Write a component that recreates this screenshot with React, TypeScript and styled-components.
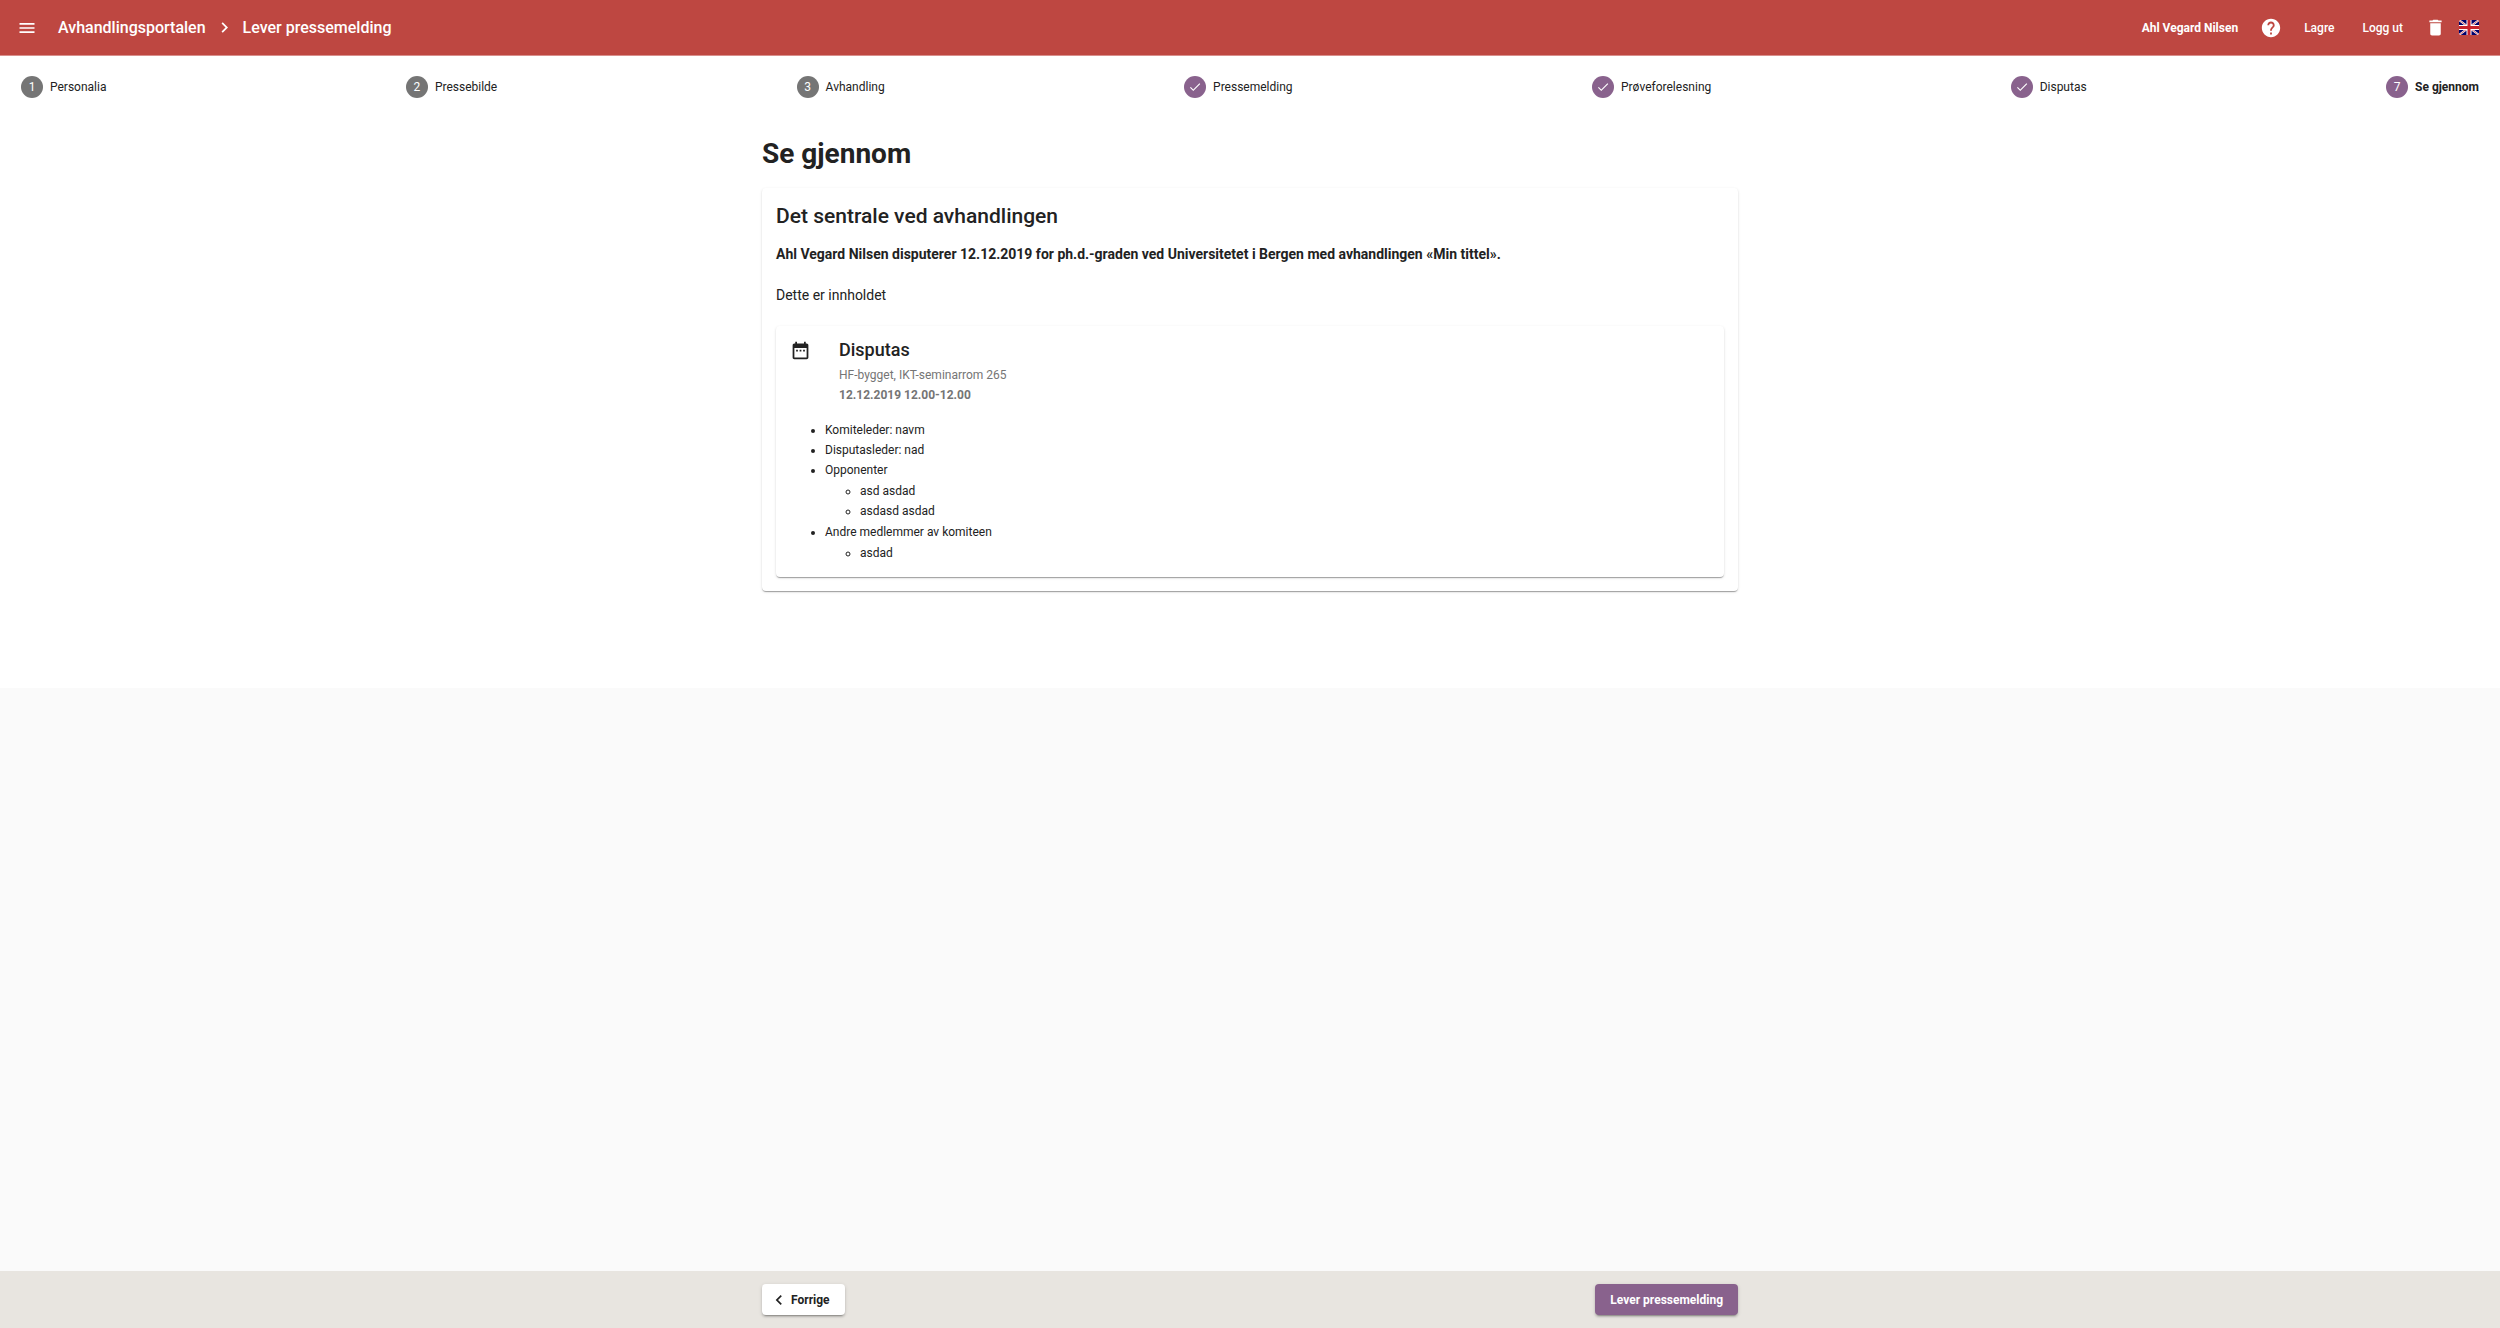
import React from "react";
import styled, { createGlobalStyle, css } from "styled-components";

const GlobalStyle = createGlobalStyle`
  *, *::before, *::after { box-sizing: border-box; }
  body {
    margin: 0;
    background: #fafafa;
    color: #222;
    font-family: Roboto, "Liberation Sans", sans-serif;
    font-size: 12px;
    line-height: 20px;
  }
  h1, h2, h3, p, ul, ol { margin: 0; padding: 0; }
`;

const Page = styled.div`
  min-height: 100vh;
  display: flex;
  flex-direction: column;
`;

const TopBar = styled.header`
  height: 56px;
  padding: 0 21px 0 17px;
  display: flex;
  align-items: center;
  justify-content: space-between;
  background: #be4741;
  border-bottom: 1px solid #d98f8c;
  color: #fff;
`;

const Group = styled.div<{ $gap: number }>`
  display: flex;
  align-items: center;
  gap: ${(p) => p.$gap}px;
`;

const bare = css`
  display: flex;
  align-items: center;
  padding: 0;
  border: 0;
  background: none;
  color: inherit;
  font: inherit;
  font-weight: 500;
  text-decoration: none;
  cursor: pointer;
`;

const BarButton = styled.button`
  ${bare}
`;

const BarText = styled.span`
  font-weight: 700;
`;

const Crumbs = styled.nav`
  display: flex;
  align-items: center;
  gap: 8px;
  font-size: 16px;
  font-weight: 500;
`;

const CrumbLink = styled.a`
  ${bare}
`;

const Icon = styled.svg<{ $size: number }>`
  display: block;
  flex: none;
  width: ${(p) => p.$size}px;
  height: ${(p) => p.$size}px;
  fill: currentColor;
`;

const Flag = styled.svg`
  display: block;
  width: 20px;
  height: 15px;
`;

const Main = styled.main`
  background: #fff;
  padding-bottom: 97px;
`;

const Steps = styled.ol`
  display: flex;
  justify-content: space-between;
  padding: 20px 21px 0;
  list-style: none;
`;

const StepButton = styled.button<{ $current: boolean }>`
  ${bare}
  gap: 7px;
  height: 22px;
  font-weight: ${(p) => (p.$current ? 700 : 400)};
`;

const Dot = styled.span<{ $active: boolean }>`
  display: flex;
  align-items: center;
  justify-content: center;
  width: 22px;
  height: 22px;
  border-radius: 50%;
  background: ${(p) => (p.$active ? "#89628d" : "#757575")};
  color: #fff;
  font-weight: 400;
`;

const Column = styled.div`
  width: 100%;
  max-width: 976px;
  margin: 0 auto;
`;

const Title = styled.h1`
  margin: 37px 0 15px;
  font-size: 28px;
  line-height: 38px;
  font-weight: 700;
`;

const Card = styled.section`
  border-radius: 4px;
  background: #fff;
  box-shadow: 0 1px 3px rgba(0, 0, 0, 0.12), 0 1px 1px rgba(0, 0, 0, 0.14),
    0 2px 1px -1px rgba(0, 0, 0, 0.2);
`;

const SummaryCard = styled(Card)`
  padding: 14px;
`;

const CardHeading = styled.h2`
  font-size: 21px;
  line-height: 28px;
  font-weight: 500;
`;

const Lead = styled.p`
  margin-top: 14px;
  font-size: 14px;
  font-weight: 700;
`;

const Body = styled.p`
  margin: 21px 0;
  font-size: 14px;
`;

const EventCard = styled(Card)`
  padding: 14px 14px 13px;
`;

const EventHeader = styled.div`
  display: flex;
  gap: 28px;
`;

const EventTitle = styled.h3`
  font-size: 18px;
  line-height: 20px;
  font-weight: 500;
`;

const EventMeta = styled.p<{ $strong?: boolean }>`
  margin-top: ${(p) => (p.$strong ? 0 : 5)}px;
  color: #757575;
  font-weight: ${(p) => (p.$strong ? 700 : 400)};
`;

const List = styled.ul`
  margin-top: 15px;
  padding-left: 35px;
`;

const SubList = styled.ul`
  margin: 1px 0;
  padding-left: 35px;
`;

const Footer = styled.footer`
  position: sticky;
  bottom: 0;
  margin-top: auto;
  padding: 13px 0;
  background: #e8e5e0;
`;

const FooterRow = styled(Column)`
  display: flex;
  justify-content: space-between;
`;

const Action = styled.button<{ $primary?: boolean }>`
  display: flex;
  align-items: center;
  gap: 2px;
  height: 31px;
  padding: ${(p) => (p.$primary ? "0 15px" : "0 15px 0 7px")};
  border: 0;
  border-radius: 4px;
  background: ${(p) => (p.$primary ? "#89628d" : "#fff")};
  color: ${(p) => (p.$primary ? "#fff" : "#222")};
  font: inherit;
  font-weight: 700;
  cursor: pointer;
  box-shadow: 0 1px 4px rgba(0, 0, 0, 0.12), 0 2px 2px rgba(0, 0, 0, 0.14),
    0 3px 1px -2px rgba(0, 0, 0, 0.2);
`;

const paths = {
  menu: "M3 18h18v-2H3v2zm0-5h18v-2H3v2zm0-7v2h18V6H3z",
  right: "M10 6L8.59 7.41 13.17 12l-4.58 4.59L10 18l6-6z",
  left: "M15.41 7.41L14 6l-6 6 6 6 1.41-1.41L10.83 12z",
  help: "M12 2C6.48 2 2 6.48 2 12s4.48 10 10 10 10-4.48 10-10S17.52 2 12 2zm1 17h-2v-2h2v2zm2.07-7.75l-.9.92C13.45 12.9 13 13.5 13 15h-2v-.5c0-1.1.45-2.1 1.17-2.83l1.24-1.26c.37-.36.59-.86.59-1.41 0-1.1-.9-2-2-2s-2 .9-2 2H8c0-2.21 1.79-4 4-4s4 1.79 4 4c0 .88-.36 1.68-.93 2.25z",
  trash: "M6 19c0 1.1.9 2 2 2h8c1.1 0 2-.9 2-2V7H6v12zM19 4h-3.5l-1-1h-5l-1 1H5v2h14V4z",
  check: "M9 16.17L4.83 12l-1.42 1.41L9 19 21 7l-1.41-1.41z",
  calendar:
    "M9 11H7v2h2v-2zm4 0h-2v2h2v-2zm4 0h-2v2h2v-2zm2-7h-1V2h-2v2H8V2H6v2H5c-1.11 0-1.99.9-1.99 2L3 20c0 1.1.89 2 2 2h14c1.1 0 2-.9 2-2V6c0-1.1-.9-2-2-2zm0 16H5V9h14v11z",
};

const Glyph = ({ name, size }: { name: keyof typeof paths; size: number }) => (
  <Icon $size={size} viewBox="0 0 24 24" aria-hidden="true">
    <path d={paths[name]} />
  </Icon>
);

const UkFlag = () => (
  <Flag viewBox="0 0 20 15" aria-hidden="true">
    <rect width="20" height="15" fill="#00006b" />
    <path d="M0 0L20 15M20 0L0 15" stroke="#fff" strokeWidth="2" />
    <path d="M0 0L20 15M20 0L0 15" stroke="#c8232c" strokeWidth="0.7" />
    <path d="M10 0V15M0 7.5H20" stroke="#fff" strokeWidth="5" />
    <path d="M10 0V15M0 7.5H20" stroke="#c8232c" strokeWidth="3" />
  </Flag>
);

const steps = [
  { label: "Personalia", done: false },
  { label: "Pressebilde", done: false },
  { label: "Avhandling", done: false },
  { label: "Pressemelding", done: true },
  { label: "Prøveforelesning", done: true },
  { label: "Disputas", done: true },
  { label: "Se gjennom", done: false },
];
const currentStep = 6;

export default function App() {
  return (
    <Page>
      <GlobalStyle />
      <TopBar>
        <Group $gap={21}>
          <BarButton aria-label="Meny">
            <Glyph name="menu" size={20} />
          </BarButton>
          <Crumbs>
            <CrumbLink href="#">Avhandlingsportalen</CrumbLink>
            <Glyph name="right" size={21} />
            <span>Lever pressemelding</span>
          </Crumbs>
        </Group>
        <Group $gap={22}>
          <BarText>Ahl Vegard Nilsen</BarText>
          <BarButton aria-label="Hjelp">
            <Glyph name="help" size={22} />
          </BarButton>
          <Group $gap={28}>
            <BarButton>Lagre</BarButton>
            <BarButton>Logg ut</BarButton>
          </Group>
          <Group $gap={13}>
            <BarButton aria-label="Slett">
              <Glyph name="trash" size={21} />
            </BarButton>
            <BarButton aria-label="English">
              <UkFlag />
            </BarButton>
          </Group>
        </Group>
      </TopBar>
      <Main>
        <Steps>
          {steps.map((step, i) => (
            <li key={step.label}>
              <StepButton $current={i === currentStep}>
                <Dot $active={step.done || i === currentStep}>
                  {step.done ? <Glyph name="check" size={14} /> : i + 1}
                </Dot>
                {step.label}
              </StepButton>
            </li>
          ))}
        </Steps>
        <Column>
          <Title>Se gjennom</Title>
          <SummaryCard>
            <CardHeading>Det sentrale ved avhandlingen</CardHeading>
            <Lead>
              Ahl Vegard Nilsen disputerer 12.12.2019 for ph.d.-graden ved
              Universitetet i Bergen med avhandlingen «Min tittel».
            </Lead>
            <Body>Dette er innholdet</Body>
            <EventCard>
              <EventHeader>
                <Glyph name="calendar" size={21} />
                <div>
                  <EventTitle>Disputas</EventTitle>
                  <EventMeta>HF-bygget, IKT-seminarrom 265</EventMeta>
                  <EventMeta $strong>12.12.2019 12.00-12.00</EventMeta>
                </div>
              </EventHeader>
              <List>
                <li>Komiteleder: navm</li>
                <li>Disputasleder: nad</li>
                <li>
                  Opponenter
                  <SubList>
                    <li>asd asdad</li>
                    <li>asdasd asdad</li>
                  </SubList>
                </li>
                <li>
                  Andre medlemmer av komiteen
                  <SubList>
                    <li>asdad</li>
                  </SubList>
                </li>
              </List>
            </EventCard>
          </SummaryCard>
        </Column>
      </Main>
      <Footer>
        <FooterRow>
          <Action>
            <Glyph name="left" size={20} />
            Forrige
          </Action>
          <Action $primary>Lever pressemelding</Action>
        </FooterRow>
      </Footer>
    </Page>
  );
}
